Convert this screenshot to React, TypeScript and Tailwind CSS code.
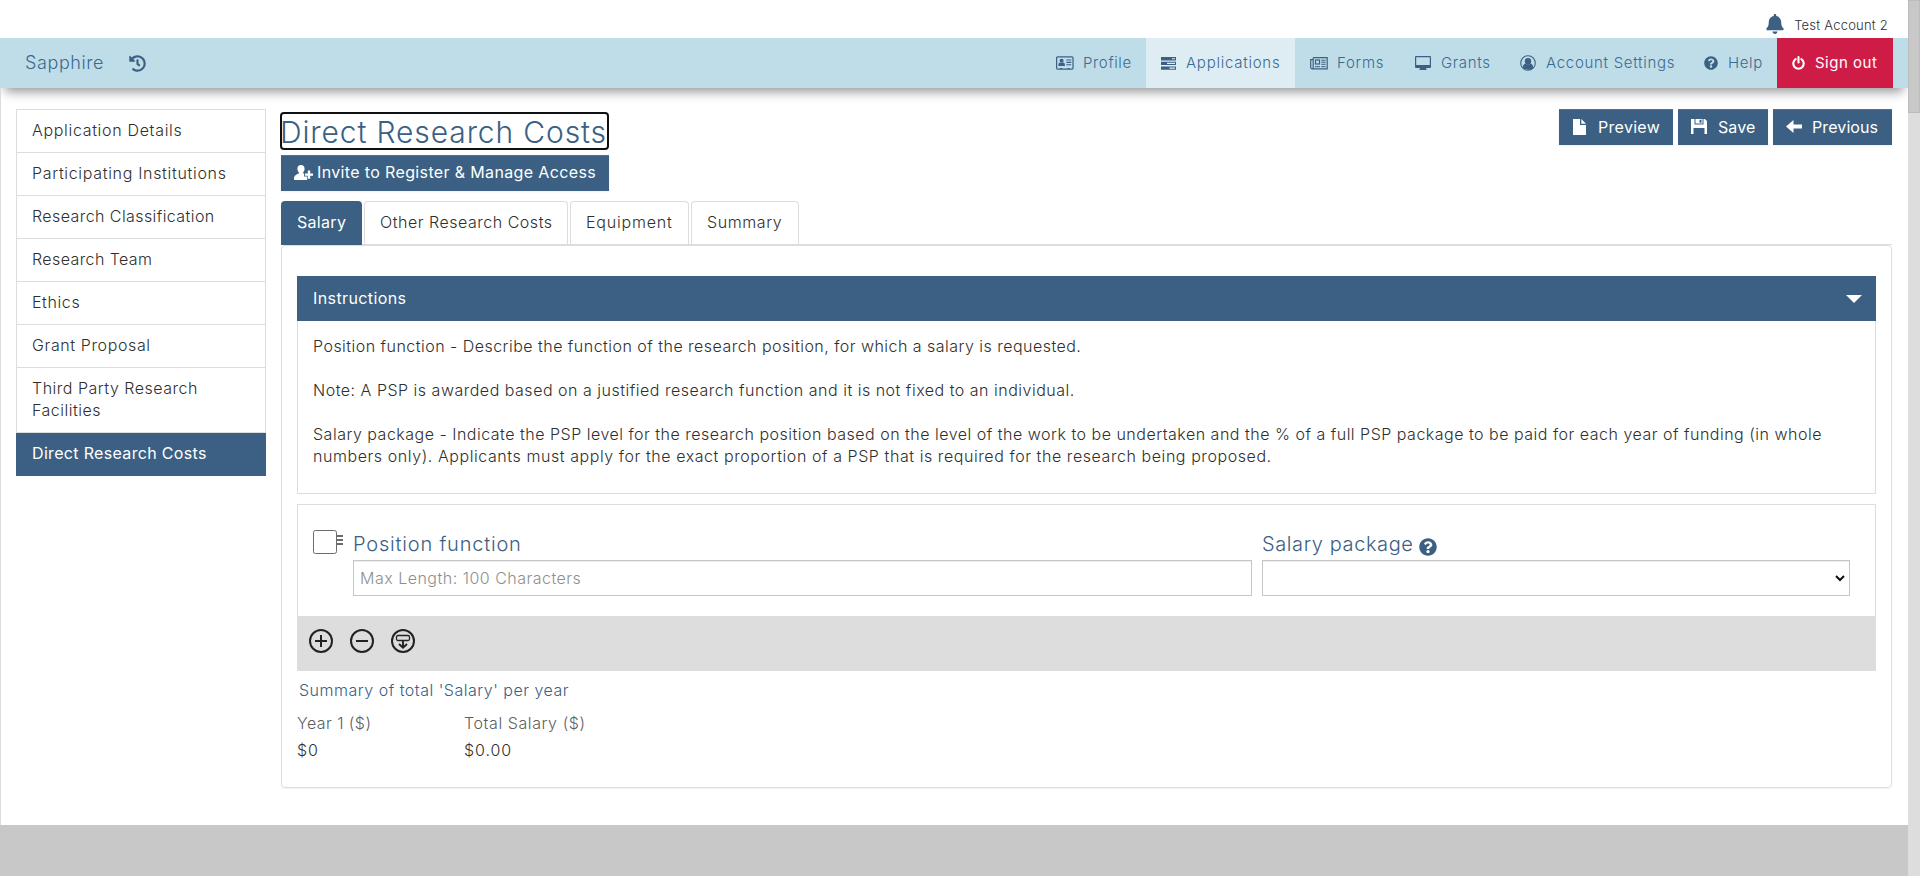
import type { ReactNode } from 'react';
import { FaBell, FaHistory, FaQuestionCircle } from 'react-icons/fa';

const IdCardIcon = () => (
  <svg width="18" height="14" viewBox="0 0 18 14" fill="currentColor">
    <rect x="0.6" y="0.9" width="16.4" height="12.2" rx="1" fill="none" stroke="currentColor" strokeWidth="1.2" />
    <circle cx="5.6" cy="4.8" r="2" />
    <path d="M2.4 10v-1.2c0-1.5.9-2.3 1.7-2.3.8.7 2.2.7 3 0 .8 0 1.8.8 1.8 2.3V10z" />
    <path d="M10.3 3.4h5v1.1h-5zM10.3 5.8h5v1.1h-5zM10.3 8.2h5v1.1h-5zM4 12h2v1H4zM11.5 12h2v1h-2z" />
  </svg>
);

const TasksIcon = () => (
  <svg width="15" height="13" viewBox="0 0 15 13" fill="currentColor">
    <path fillRule="evenodd" d="M0 0h15v3.4H0zM11 1.2v1.1h3V1.2zM0 4.7h15v3.4H0zM6 5.8v1.2h8V5.8zM0 9.4h15v3.4H0zM8.5 10.5v1.2H14v-1.2z" />
  </svg>
);

const NewsIcon = () => (
  <svg width="18" height="13" viewBox="0 0 18 13" fill="none" stroke="currentColor">
    <path d="M3.2.7h14v11.1H2.2C1.2 11.8.7 11.2.7 10.3V2.6h2.1M3.2.7v9.6c0 .9-.4 1.5-1.1 1.5" strokeWidth="1.2" />
    <rect x="5.5" y="3" width="4" height="4" strokeWidth="1.2" />
    <path d="M11.3 3.2h4.3M11.3 5.2h4.3M11.3 7.3h4.3M5 9.7h5M11.3 9.7h4.3" />
  </svg>
);

const DesktopIcon = () => (
  <svg width="16" height="15" viewBox="0 0 16 15" fill="currentColor">
    <path fillRule="evenodd" d="M1 0h14a1 1 0 0 1 1 1v10a1 1 0 0 1-1 1h-4l.5 1.2V14h-7v-.8L5 12H1a1 1 0 0 1-1-1V1a1 1 0 0 1 1-1zM1.2 1.2V9h13.600V1.2z" />
  </svg>
);

const UserCircleIcon = () => (
  <svg width="16" height="16" viewBox="0 0 16 16" fill="currentColor">
    <circle cx="8" cy="8" r="7.3" fill="none" stroke="currentColor" strokeWidth="1.1" />
    <circle cx="8" cy="6.2" r="3.2" />
    <path d="M2.7 12.4c.3-2.3 1.3-3.700 2.700-4 1.400 1.200 3.800 1.200 5.200 0 1.400.3 2.400 1.700 2.700 4-2.600 3.100-8 3.100-10.600 0z" />
  </svg>
);

const PowerIcon = () => (
  <svg width="13" height="14" viewBox="0 0 13 14" fill="none" stroke="currentColor" strokeWidth="2.1" strokeLinecap="round">
    <path d="M3.6 3.2a5.2 5.2 0 1 0 5.8 0M6.5 1.1v5.4" />
  </svg>
);

const UserPlusIcon = () => (
  <svg width="19" height="15" viewBox="0 0 19 15" fill="currentColor">
    <path d="M7 0c2.300 0 3.600 1.600 3.600 3.800 0 1.400-.6 2.800-1.500 3.600v.8l1 .5v2.900h3V15H.8C.3 15 0 14.700 0 14.200c0-3.100 1-4 4.900-5.900v-.9C4 6.600 3.400 5.200 3.400 3.800 3.400 1.600 4.700 0 7 0z" />
    <path d="M13.800 5.600h2.400v2.900H19v2.300h-2.800v2.900h-2.400v-2.900H11V8.500h2.800z" />
  </svg>
);

const FileIcon = () => (
  <svg width="13" height="16" viewBox="0 0 13 16" fill="currentColor">
    <path d="M0 0h7v6h6v10H0zM8.300 0 13 4.800H8.300z" />
  </svg>
);

const SaveIcon = () => (
  <svg width="16" height="15" viewBox="0 0 16 15" fill="currentColor">
    <path fillRule="evenodd" d="M0 0h3.500v5.500h9V0h1.300L16 2v13h-2.500V9h-11v6H0zM4.500 0H11.500v4.500H4.500zM8.500.8v3h2v-3z" />
  </svg>
);

const ArrowLeftIcon = () => (
  <svg width="16" height="13" viewBox="0 0 16 13" fill="currentColor">
    <path d="M0 6.500 7.500 0v4.500H16v4H7.500V13z" />
  </svg>
);

const nav: { label: string; icon: ReactNode; box: string }[] = [
  { label: 'Profile', icon: <IdCardIcon />, box: 'w-[105px] gap-[9px] tracking-[0.65px]' },
  { label: 'Applications', icon: <TasksIcon />, box: 'w-[149px] gap-[10px] bg-[#deedf4] tracking-[0.75px]' },
  { label: 'Forms', icon: <NewsIcon />, box: 'w-[105px] gap-[9px] tracking-[0.75px]' },
  { label: 'Grants', icon: <DesktopIcon />, box: 'w-[105px] gap-[10px] tracking-[0.65px]' },
  { label: 'Account Settings', icon: <UserCircleIcon />, box: 'w-[184px] gap-[10px] tracking-[0.7px]' },
  { label: 'Help', icon: <FaQuestionCircle size={14} />, box: 'w-[88px] gap-[10px] tracking-[0.65px]' },
];

const side: { label: string; track: string }[] = [
  { label: 'Application Details', track: 'tracking-[0.68px]' },
  { label: 'Participating Institutions', track: 'tracking-[0.68px]' },
  { label: 'Research Classification', track: 'tracking-[0.42px]' },
  { label: 'Research Team', track: 'tracking-[0.4px]' },
  { label: 'Ethics', track: 'tracking-[0.6px]' },
  { label: 'Grant Proposal', track: 'tracking-[0.62px]' },
  { label: 'Third Party Research Facilities', track: 'tracking-[0.5px]' },
];

const tabs: { label: string; box: string }[] = [
  { label: 'Other Research Costs', box: 'w-[204px] tracking-[0.52px]' },
  { label: 'Equipment', box: 'w-[119px] tracking-[0.8px]' },
  { label: 'Summary', box: 'w-[108px] tracking-[0.6px]' },
];

const actionButton = 'flex h-9 items-center bg-[#3b6083] pb-[1px] font-normal text-white shadow-[inset_0_1px_0_#4f7394,0_1px_2px_rgba(0,0,0,0.06)]';

function RoundIcon({ children }: { children: ReactNode }) {
  return (
    <svg width="24" height="24" viewBox="0 0 24 24" fill="none" stroke="#222" strokeWidth="2">
      <circle cx="12" cy="12" r="11" />
      {children}
    </svg>
  );
}

export default function App() {
  return (
    <div className="flex h-[876px] w-[1920px] overflow-hidden bg-white font-['Inter',sans-serif] text-base leading-[22px] font-light text-[#2f2f2f]">
      <div className="flex w-[1908px] flex-col overflow-hidden">
        <header className="flex h-[38px] shrink-0 items-start justify-end pr-5">
          <FaBell size={20} className="mt-[14px] mr-[9px] text-[#3b6083]" />
          <span className="mt-[14px] text-[13px] tracking-[0.22px] whitespace-nowrap">Test Account 2</span>
        </header>

        <nav className="flex h-[50px] shrink-0 items-center justify-between bg-[#bfdde8] pr-[15px] pl-[25px] text-[#3b6a91] shadow-[0_9px_10px_-5px_rgba(0,0,0,0.4)]">
          <div className="flex items-center">
            <span className="w-[104px] text-[18px] tracking-[0.6px]">Sapphire</span>
            <FaHistory size={17} className="text-[#3b6083]" />
          </div>
          <ul className="flex h-full text-[15px]">
            {nav.map((n) => (
              <li key={n.label} className={`flex items-center pl-[15px] whitespace-nowrap ${n.box}`}>
                <span className="text-[#3b6083]">{n.icon}</span>
                <span>{n.label}</span>
              </li>
            ))}
            <li className="flex w-[116px] items-center gap-[10px] bg-[#cf1c46] pl-[15px] font-normal tracking-[0.5px] whitespace-nowrap text-white">
              <PowerIcon />
              <span>Sign out</span>
            </li>
          </ul>
        </nav>

        <div className="flex h-[737px] shrink-0 items-start border-l border-[#ddd] pt-[21px] pl-[15px]">
          <ul className="w-[250px] shrink-0">
            {side.map((s) => (
              <li key={s.label} className={`border-x border-t border-[#ddd] px-[15px] pt-[9px] pb-[11px] ${s.track}`}>
                {s.label}
              </li>
            ))}
            <li className="border-t border-[#ddd] bg-[#3b6083] bg-clip-padding px-4 pt-[9px] pb-3 font-normal tracking-[0.33px] text-white">Direct Research Costs</li>
          </ul>

          <main className="ml-[15px] w-[1611px]">
            <div className="flex items-start justify-between">
              <div>
                <h1 className="mt-[5px] ml-[1px] flex h-[34px] w-[325px] items-center rounded-[2px] pt-[2px] text-[30px] leading-[34px] tracking-[0.88px] whitespace-nowrap text-[#3b6083] outline-2 outline-[#101010]">
                  <span className="-ml-[2px]">Direct Research Costs</span>
                </h1>
                <button className={`${actionButton} mt-[7px] w-[328px] gap-1 pb-[2px] pl-[13px] tracking-[0.36px] whitespace-nowrap`}>
                  <UserPlusIcon />
                  Invite to Register &amp; Manage Access
                </button>
              </div>
              <div className="flex gap-[5px]">
                <button className={`${actionButton} w-[114px] gap-3 pl-[14px] tracking-[0.3px]`}>
                  <FileIcon />
                  Preview
                </button>
                <button className={`${actionButton} w-[90px] gap-[11px] pl-[13px] tracking-[0.1px]`}>
                  <SaveIcon />
                  Save
                </button>
                <button className={`${actionButton} w-[119px] gap-[10px] pl-[13px] tracking-[0.1px]`}>
                  <ArrowLeftIcon />
                  Previous
                </button>
              </div>
            </div>

            <div className="mt-[10px] flex h-11 gap-[2px] border-b border-[#ddd]">
              <div className="h-11 w-[81px] rounded-t-[4px] bg-[#3b6083] pt-[10px] pl-4 font-normal tracking-[0.3px] text-white">Salary</div>
              {tabs.map((t) => (
                <div key={t.label} className={`h-[43px] rounded-t-[4px] border border-b-0 border-[#ddd] pt-[9px] pl-[15px] whitespace-nowrap ${t.box}`}>
                  {t.label}
                </div>
              ))}
            </div>

            <section className="h-[543px] rounded-[4px] border border-[#ddd] px-[15px] pt-[30px] shadow-[0_1px_1px_rgba(0,0,0,0.05)]">
              <div className="flex h-[45px] items-center justify-between bg-[#3b6083] pr-[14px] pl-4 font-normal tracking-[0.4px] text-white">
                <span className="pb-[1px]">Instructions</span>
                <svg width="16" height="8" viewBox="0 0 16 8" fill="currentColor">
                  <path d="M0 0h16L8 8z" />
                </svg>
              </div>
              <div className="h-[173px] border border-t-0 border-[#ddd] px-[15px] pt-[14px] whitespace-nowrap">
                <p className="tracking-[0.472px]">Position function - Describe the function of the research position, for which a salary is requested.</p>
                <p className="mt-[22px] tracking-[0.505px]">Note: A PSP is awarded based on a justified research function and it is not fixed to an individual.</p>
                <p className="mt-[22px] tracking-[0.5px]">
                  Salary package - Indicate the PSP level for the research position based on the level of the work to be undertaken and the % of a full PSP package to be paid for each year of funding (in whole
                </p>
                <p className="tracking-[0.57px]">numbers only). Applicants must apply for the exact proportion of a PSP that is required for the research being proposed.</p>
              </div>

              <div className="mt-[10px] flex h-[112px] items-start border border-b-0 border-[#ddd] pl-[15px]">
                <svg width="40" height="24" viewBox="0 0 40 24" className="mt-[25px] shrink-0" fill="none" stroke="#6b6b6b">
                  <rect x="0.5" y="0.5" width="23" height="23" rx="2" />
                  <path d="M24 6h6M24 10h6M24 14h6" strokeWidth="1.8" />
                </svg>
                <div className="mt-[27px] w-[899px]">
                  <label className="block h-[28px] text-[20px] leading-[24px] tracking-[0.8px] text-[#3b6083]">Position function</label>
                  <div className="flex h-9 items-center border border-[#c6c6c6] pl-[6px] tracking-[0.49px] text-[#8f8f8f] shadow-[inset_0_1px_1px_rgba(0,0,0,0.075)]">Max Length: 100 Characters</div>
                </div>
                <div className="mt-[27px] ml-[10px] w-[588px]">
                  <label className="flex h-[28px] gap-[5px] text-[20px] leading-[24px] tracking-[0.6px] text-[#3b6083]">
                    Salary package
                    <FaQuestionCircle size={18} className="mt-[6px]" />
                  </label>
                  <div className="flex h-9 items-center justify-end border border-[#c6c6c6] pr-[4px] shadow-[inset_0_1px_1px_rgba(0,0,0,0.075)]">
                    <svg width="10" height="7" viewBox="0 0 10 7" fill="none" stroke="#111" strokeWidth="2">
                      <path d="m1 1 4 4 4-4" />
                    </svg>
                  </div>
                </div>
              </div>
              <div className="flex h-[55px] items-start gap-[17px] bg-[#ddd] pt-[13px] pl-3">
                <RoundIcon>
                  <path d="M12 6v12M6 12h12" />
                </RoundIcon>
                <RoundIcon>
                  <path d="M6 12h12" />
                </RoundIcon>
                <RoundIcon>
                  <rect x="5.5" y="6.5" width="13" height="5" rx="1.5" strokeWidth="1.3" />
                  <path d="M12 11.500v7M8 15l4 3.800 4-3.800" strokeWidth="1.900" />
                </RoundIcon>
              </div>
              <h2 className="mt-2 pl-[2px] tracking-[0.5px] text-[#3b6083]">Summary of total 'Salary' per year</h2>
              <dl className="mt-[9px] flex leading-[27px] tracking-[0.58px]">
                <div className="w-[167px]">
                  <dt className="tracking-[0.45px] text-[#5e5e5e]">Year 1 ($)</dt>
                  <dd className="tracking-[0.9px]">$0</dd>
                </div>
                <div>
                  <dt className="text-[#5e5e5e]">Total Salary ($)</dt>
                  <dd className="tracking-[0.9px]">$0.00</dd>
                </div>
              </dl>
            </section>
          </main>
        </div>
        <footer className="h-[51px] shrink-0 bg-[#c8c8c8]" />
      </div>
      <aside className="w-3 bg-[#ddd]">
        <div className="h-[113px] border border-[#bcbcbc] bg-[#c8c8c8]" />
      </aside>
    </div>
  );
}
